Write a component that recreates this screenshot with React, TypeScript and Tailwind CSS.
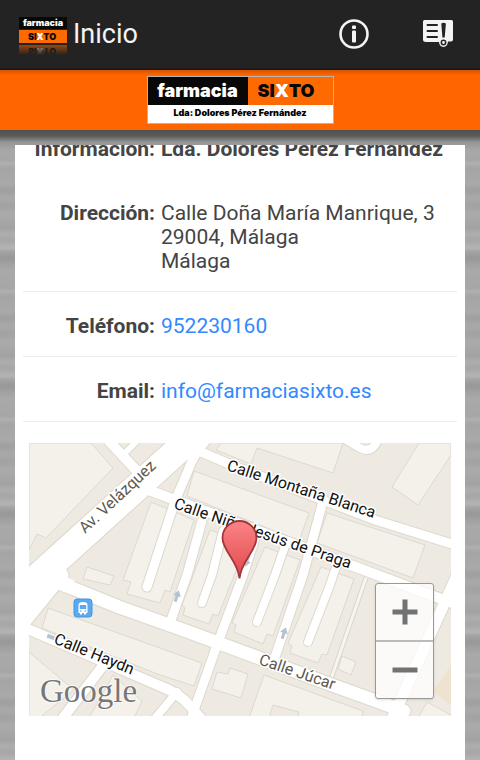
import type { ReactNode } from 'react';

const contact = {
  owner: 'Lda. Dolores Pérez Fernández',
  address: ['Calle Doña María Manrique, 3', '29004, Málaga', 'Málaga'],
  phone: '952230160',
  email: 'info@farmaciasixto.es',
};

function AppIcon() {
  return (
    <svg className="h-[42px] w-12 shrink-0" viewBox="0 -4 48 42" aria-hidden="true">
      <defs>
        <linearGradient id="fade" x1="0" y1="0" x2="0" y2="1">
          <stop offset="0" stopColor="#232323" stopOpacity="0.4" />
          <stop offset="1" stopColor="#232323" />
        </linearGradient>
        <clipPath id="mirror">
          <rect y="28" width="48" height="10" />
        </clipPath>
      </defs>
      <rect width="48" height="12" fill="#080808" />
      <rect y="13" width="48" height="13" fill="#ff6a00" />
      <g fontFamily="Inter, sans-serif" fontWeight="900" textAnchor="middle">
        <text x="24" y="9" fontSize="9" fill="#fff">farmacia</text>
        <text x="23" y="23" fontSize="9" fill="#080808">
          SI<tspan fill="#fff">X</tspan>TO
        </text>
      </g>
      <g clipPath="url(#mirror)">
        <rect y="28" width="48" height="10" fill="#e86000" />
        <text
          x="23"
          y="-31"
          transform="scale(1 -1)"
          fontFamily="Inter, sans-serif"
          fontWeight="900"
          fontSize="9"
          textAnchor="middle"
          fill="#080808"
        >
          SI<tspan fill="#fff">X</tspan>TO
        </text>
        <rect y="28" width="48" height="10" fill="url(#fade)" />
      </g>
    </svg>
  );
}

function InfoIcon() {
  return (
    <svg className="size-[30px]" viewBox="0 0 30 30" aria-hidden="true">
      <circle cx="15" cy="15" r="13.5" fill="none" stroke="#f4f4f4" strokeWidth="2.6" />
      <rect x="13" y="6.5" width="4" height="3.5" rx="1" fill="#f4f4f4" />
      <rect x="13" y="11.5" width="4" height="12" rx="1" fill="#f4f4f4" />
    </svg>
  );
}

function NoticeIcon() {
  return (
    <svg className="size-[30px]" viewBox="0 0 30 30" aria-hidden="true">
      <path
        d="M1.5 1h27Q30 1 30 2.5v18q0 2-2 2H25q-.5 5-4.600 5.500Q16.300 27.500 16 23H3Q0 23 0 20.500V2.500Q0 1 1.500 1Z"
        fill="#f4f4f4"
      />
      <path d="M4.500 6h9.500M4.500 12h9.500M4.500 18h9.500" stroke="#232323" strokeWidth="2" strokeLinecap="round" />
      <path d="M18.300 4.500q2.300-1.500 4.600 0L21.700 18.500h-2.300Z" fill="#232323" />
      <circle cx="20.500" cy="23.500" r="2.200" fill="#f4f4f4" stroke="#232323" strokeWidth="1.500" />
    </svg>
  );
}

function BrandSign() {
  return (
    <div className="flex h-12 w-[187px] flex-col border border-[#b5b5b5] bg-white font-[Inter,sans-serif] font-black">
      <div className="flex h-7 shrink-0 text-[18px] leading-7">
        <span className="flex w-[100px] justify-center bg-[#080808] text-white">farmacia</span>
        <span className="flex flex-1 justify-center bg-[#ff6a00] pr-2 text-[#080808]">
          SI<span className="text-white">X</span>TO
        </span>
      </div>
      <p className="text-center text-[9px] leading-4 text-black">Lda: Dolores Pérez Fernández</p>
    </div>
  );
}

function Row({ label, divider = true, children }: { label: string; divider?: boolean; children: ReactNode }) {
  return (
    <div className={divider ? 'flex gap-[6px] border-b border-[#ececec] pt-[22px] pb-[18px]' : 'flex gap-[6px] pb-[18px]'}>
      <dt className="w-[132px] shrink-0 text-right font-bold">{label}:</dt>
      <dd className="whitespace-nowrap">{children}</dd>
    </div>
  );
}

const buildings = [
  '0,0 62,0 84,25 17,95 8,91 0,107',
  '122,59 165,77 141,149 136,147 131,160 98,151 102,139 94,137',
  '58,124 85,133 81,142 54,136',
  '181,87 218,100 189,173 184,171 180,181 154,172 156,165 153,162',
  '236,104 271,117 244,193 238,191 234,201 205,189 207,182 203,180',
  '292,124 325,136 298,212 293,211 289,220 261,210 263,203 259,200',
  '313,213 327,219 322,232 309,226',
  '165,28 280,70 270,98 158,53',
  '298,70 396,102 384,135 288,100',
  '187,7 192,0 314,0 304,30 228,5 222,21',
  '390,0 422,0 422,12 389,62 363,44',
  '19,165 173,220 165,243 131,232 13,185',
  '188,229 199,231 201,225 219,231 212,255 183,246',
  '235,232 334,268 333,275 220,275',
  '398,259 422,272 422,275 389,275',
  '0,209 45,247 10,275 0,275',
  '84,232 113,258 105,275 60,275',
];

const roads = [
  { d: 'M-20 160 180 -21', width: 27 },
  { d: 'M-8 181 32 132', width: 15 },
  { d: 'M80 -2 107 27', width: 10 },
  { d: 'M96 10 110 -4', width: 6 },
  { d: 'M28 139 90 164 160 189 303 242 375 268', width: 13 },
  { d: 'M-8 183 131 243Q150 250 160 262L176 280', width: 10 },
  { d: 'M73 224 30 280', width: 10 },
  { d: 'M148 249 124 278', width: 8 },
  { d: 'M163 273 188 202 213 135 226 95', width: 9 },
  { d: 'M180 -6Q165 10 158 30L146 58 118 144', width: 9 },
  { d: 'M170 8 200 21 346 77 426 102', width: 9 },
  { d: 'M122 48 324 123 426 161', width: 10 },
  { d: 'M173 78 158 132 141 180', width: 9 },
  { d: 'M194 88 183 132 173 160', width: 8 },
  { d: 'M257 100 246 132 228 179', width: 8 },
  { d: 'M293 62 274 132 246 214', width: 9 },
  { d: 'M309 118 301 142 279 199', width: 8 },
  { d: 'M430 128 368 265 360 282', width: 11 },
  { d: 'M314 -5 331 5Q340 10 346 2L351 -6', width: 8 },
];

function StreetMap() {
  return (
    <svg className="block w-full" viewBox="0 0 422 273" role="img" aria-label="Mapa">
      <defs>
        <linearGradient id="pin" x1="0" y1="0" x2="0" y2="1">
          <stop offset="0" stopColor="#fb8585" />
          <stop offset="1" stopColor="#e0474c" />
        </linearGradient>
        <path id="arrow" d="M0 -6 4 0H1.500V6h-3V0H-4Z" fill="#b7c3cc" />
      </defs>
      <rect width="422" height="273" fill="#eeeae2" />
      <g fill="#f4f1ea" stroke="#dbd9d2" strokeWidth="1">
        {buildings.map((points) => (
          <polygon key={points} points={points} />
        ))}
      </g>
      <polygon points="244,262 270,269 269,275 240,275" fill="#eeeae2" stroke="#dbd9d2" />
      <polygon points="422,222 404,248 422,262" fill="#efe3d0" />

      <g fill="none" strokeLinecap="round" strokeLinejoin="round">
        <path d="M338 132 302 236" stroke="#d9d5ca" strokeWidth="5" />
        <path d="M338 132 302 236" stroke="#f7f5ef" strokeWidth="3" />
        {roads.map((road) => (
          <path key={road.d} d={road.d} stroke="#dcd8cd" strokeWidth={road.width + 2} />
        ))}
        {roads.map((road) => (
          <path key={road.d} d={road.d} stroke="#fff" strokeWidth={road.width} />
        ))}
      </g>
      <polygon points="0,124 0,164 20,143 38,150 46,138 37,134 35,128 45,118" fill="#fff" />

      <use href="#arrow" transform="translate(148 153) rotate(18)" />
      <use href="#arrow" transform="translate(255 190) rotate(18)" />
      <use href="#arrow" transform="translate(218 118) rotate(198)" />
      <rect x="18" y="192" width="8" height="4" transform="rotate(20 22 194)" fill="#b7c3cc" />

      {/* bus stop */}
      <g transform="translate(45 156)">
        <rect width="18" height="18" rx="3" fill="#5aaaf0" stroke="#4596e0" />
        <path d="M4.500 6Q4.500 3 9 3t4.500 3v8h-1.500v1.500h-2V14H8v1.500H6V14H4.500Z" fill="#fff" />
        <rect x="5.800" y="6" width="6.400" height="4" fill="#5aaaf0" />
        <circle cx="6.700" cy="12" r=".8" fill="#5aaaf0" />
        <circle cx="11.300" cy="12" r=".8" fill="#5aaaf0" />
      </g>

      <g
        fontFamily="Roboto, sans-serif"
        fontSize="16"
        stroke="#fff"
        strokeWidth="3"
        strokeLinejoin="round"
        paintOrder="stroke"
      >
        <text transform="translate(56 91) rotate(-43)" fill="#5c594e">Av. Velázquez</text>
        <text transform="translate(197 27) rotate(18)" fill="#111">Calle Montaña Blanca</text>
        <text transform="translate(144 65) rotate(19)" fill="#111">Calle Niño Jesús de Praga</text>
        <text transform="translate(24 200) rotate(22)" fill="#111">Calle Haydn</text>
        <text transform="translate(229 221) rotate(19)" fill="#5c594e">Calle Júcar</text>
      </g>

      <path
        d="M210.500 135.500C209 118 193.500 108 193.500 95a17 17 0 0 1 34 0C227.500 108 212 118 210.500 135.500Z"
        fill="url(#pin)"
        stroke="#a2363a"
        strokeWidth="1.800"
      />
      <text
        x="11"
        y="259"
        fontFamily="Liberation Serif, serif"
        fontSize="33"
        fill="#777"
        stroke="#fff"
        strokeOpacity="0.7"
        strokeWidth="2"
        paintOrder="stroke"
      >
        Google
      </text>
    </svg>
  );
}

function ZoomControls() {
  return (
    <div className="absolute right-[17px] bottom-[17px] flex w-[59px] flex-col rounded-[3px] border border-[#999] bg-white/75 shadow-sm">
      <button type="button" aria-label="Acercar" className="flex h-[58px] items-center justify-center border-b-2 border-[#bbb]">
        <svg className="size-[26px]" viewBox="0 0 26 26" aria-hidden="true">
          <path d="M13 .5v25M.5 13h25" stroke="#727272" strokeWidth="5" />
        </svg>
      </button>
      <button type="button" aria-label="Alejar" className="flex h-14 items-center justify-center">
        <svg className="size-[26px]" viewBox="0 0 26 26" aria-hidden="true">
          <path d="M.5 13h25" stroke="#727272" strokeWidth="5" />
        </svg>
      </button>
    </div>
  );
}

export default function App() {
  return (
    <div className="flex min-h-screen flex-col bg-[#a8a8a8] font-[Roboto,sans-serif]">
      <header className="flex h-[70px] items-center border-b-2 border-[#1a1a1a] bg-[#232323] pr-[27px] pl-[19px]">
        <AppIcon />
        <h1 className="ml-[6px] flex-1 text-[27px] leading-8 text-[#f4f4f4]">Inicio</h1>
        <div className="flex gap-[54px]">
          <button type="button" aria-label="Información">
            <InfoIcon />
          </button>
          <button type="button" aria-label="Avisos">
            <NoticeIcon />
          </button>
        </div>
      </header>

      <div className="flex h-[60px] items-center justify-center bg-[#ff6600] bg-[linear-gradient(#d45500,#ff6600_5px)]">
        <BrandSign />
      </div>

      {/* brushed metal, tiled every 128px, with the banner's shadow on top */}
      <main className="flex flex-1 bg-[linear-gradient(#505050,#5c5c5c_6px,#8c8c8cbb_12px,transparent_20px),repeating-linear-gradient(#989898,#a9a9a9_12px,#a6a6a6_30px,#b0b0b0_33px,#a5a5a5_38px,#a9a9a9_54px,#9f9f9f_60px,#a9a9a9_68px,#a2a2a2_76px,#ababab_84px,#a2a2a2_98px,#aeaeae_104px,#a6a6a6_110px,#b4b4b4_118px,#a2a2a2_122px,#989898_128px)] px-[15px] pt-[15px]">
        <div className="flex-1 overflow-hidden bg-white px-2 pb-11 text-[#444]">
          <dl className="-mt-[8px] text-[21px] leading-6">
            <Row label="Información" divider={false}>
              <strong>{contact.owner}</strong>
            </Row>
            <Row label="Dirección">
              {contact.address.map((line) => (
                <span key={line} className="block">
                  {line}
                </span>
              ))}
            </Row>
            <Row label="Teléfono">
              <a href={`tel:${contact.phone}`} className="text-[#3388ff]">
                {contact.phone}
              </a>
            </Row>
            <Row label="Email">
              <a href={`mailto:${contact.email}`} className="text-[#3388ff]">
                {contact.email}
              </a>
            </Row>
          </dl>
          <div className="relative mx-[6px] mt-[21px]">
            <StreetMap />
            <ZoomControls />
          </div>
        </div>
      </main>
    </div>
  );
}
